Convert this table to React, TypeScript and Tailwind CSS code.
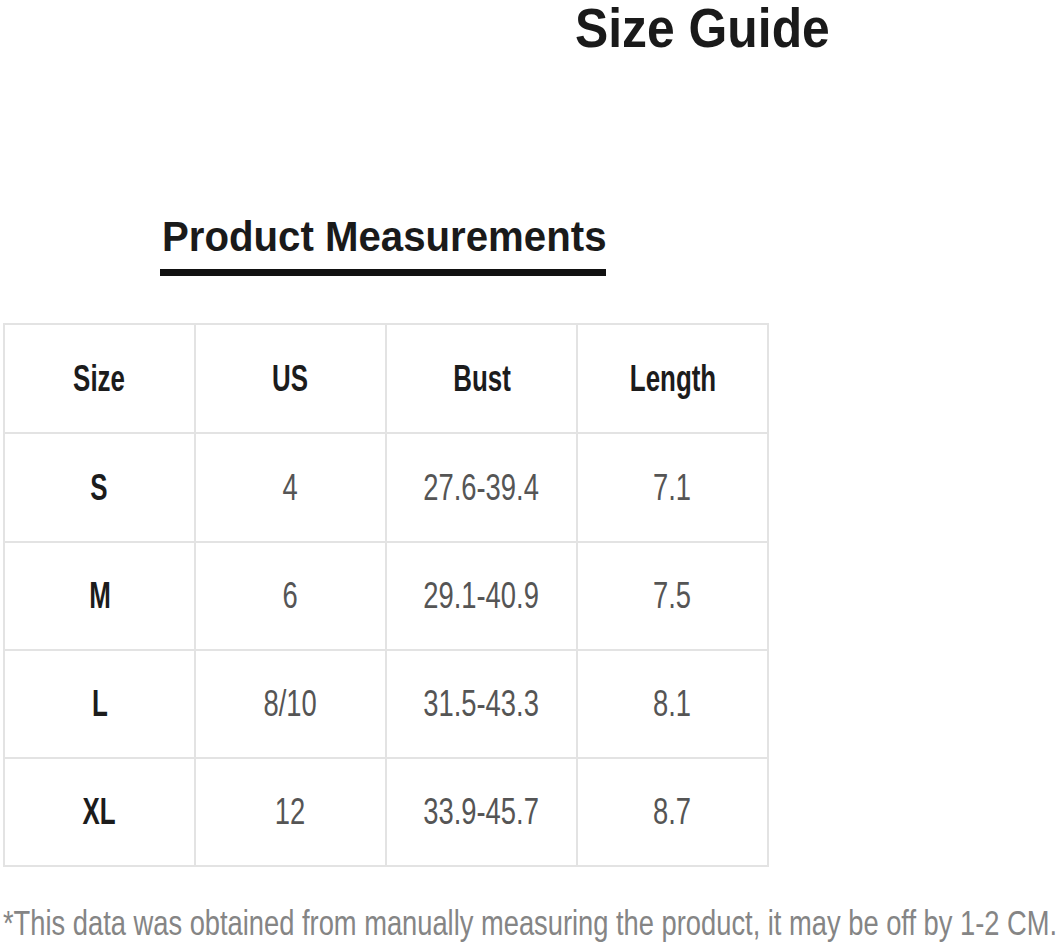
import React from "react";

const rows = [
  ["S", "4", "27.6-39.4", "7.1"],
  ["M", "6", "29.1-40.9", "7.5"],
  ["L", "8/10", "31.5-43.3", "8.1"],
  ["XL", "12", "33.9-45.7", "8.7"],
];

const font = { fontFamily: '"Liberation Sans", Arial, sans-serif' };

export default function App() {
  return (
    <div className="w-[1063px] h-[945px] bg-white overflow-hidden" style={font}>
      <div className="pl-[575px] h-[60px]">
        <span className="inline-block origin-left scale-x-[0.89] text-[56px] leading-none font-bold text-[#1a1a1a] whitespace-nowrap">
          Size Guide
        </span>
      </div>
      <div className="pl-[162px] mt-[156px]">
        <span className="inline-block origin-left scale-x-[0.957] text-[42px] leading-none font-bold text-[#1a1a1a] whitespace-nowrap">
          Product Measurements
        </span>
      </div>
      <div className="ml-[160px] mt-[11px] w-[446px] h-[7px] bg-[#111]" />
      <div className="ml-[3px] mt-[47px] w-[766px] grid grid-cols-[189px_189px_189px_189px] gap-[2px] p-[2px] bg-[#e3e3e3]">
        {["Size", "US", "Bust", "Length"].map((h) => (
          <div key={h} className="bg-white h-[107px] flex items-center justify-center">
            <span className="inline-block scale-x-[0.72] text-[36px] leading-none font-bold text-[#1c1c1c] whitespace-nowrap">
              {h}
            </span>
          </div>
        ))}
        {rows.map((r, i) =>
          r.map((c, j) => (
            <div
              key={`${i}-${j}`}
              className={`bg-white flex items-center justify-center ${i === 0 ? "h-[107px]" : "h-[106px]"}`}
            >
              {j === 0 ? (
                <span className="inline-block scale-x-[0.72] text-[36px] leading-none font-bold text-[#1c1c1c] whitespace-nowrap">
                  {c}
                </span>
              ) : (
                <span className="inline-block scale-x-[0.76] text-[36px] leading-none text-[#555555] whitespace-nowrap">
                  {c}
                </span>
              )}
            </div>
          ))
        )}
      </div>
      <div className="pl-[3px] mt-[38px]">
        <span className="inline-block origin-left scale-x-[0.78] text-[35px] leading-none text-[#858585] whitespace-nowrap">
          *This data was obtained from manually measuring the product, it may be off by 1-2 CM.
        </span>
      </div>
    </div>
  );
}
